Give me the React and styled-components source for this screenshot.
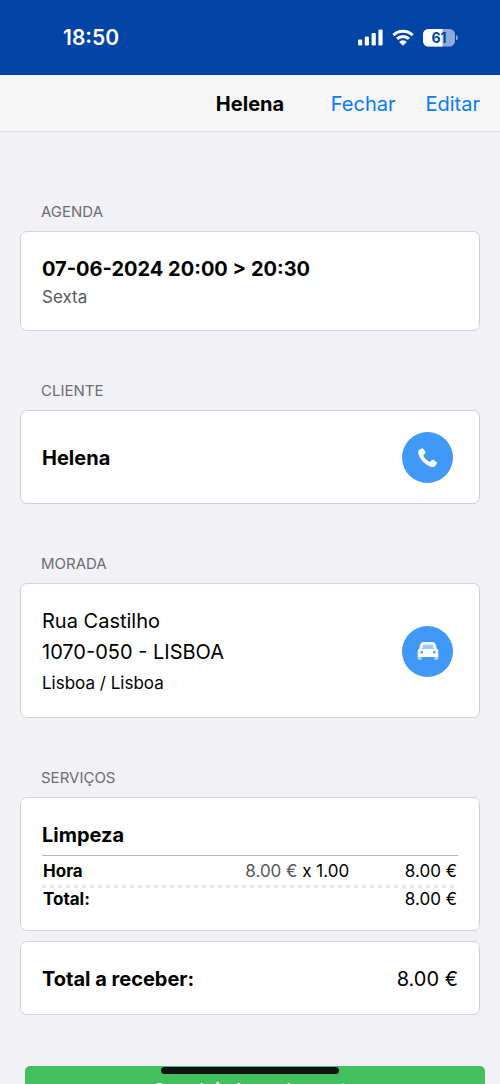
import styled, { createGlobalStyle } from "styled-components";

const GlobalStyle = createGlobalStyle`
  * {
    box-sizing: border-box;
  }
  body {
    margin: 0;
    background: #f2f1f6;
    color: #000;
    font-family: Inter, "Liberation Sans", sans-serif;
    font-size: 20px;
  }
  h1, h2, h3, p {
    margin: 0;
    font-size: inherit;
    font-weight: inherit;
  }
`;

const Screen = styled.div`
  display: flex;
  flex-direction: column;
  height: 100vh;
`;

const StatusBar = styled.div`
  display: flex;
  flex-shrink: 0;
  align-items: center;
  justify-content: space-between;
  height: 75px;
  padding: 0 42px 0 63px;
  background: #0244a5;
  color: #fff;
`;

const Clock = styled.time`
  font-size: 21px;
  font-weight: 600;
`;

const StatusIcons = styled.div`
  display: flex;
  align-items: center;
  gap: 9px;
  svg {
    display: block;
  }
`;

const BatteryLevel = styled.text`
  font-size: 14px;
  font-weight: 700;
  fill: #0244a5;
`;

const NavBar = styled.header`
  display: grid;
  grid-template-columns: 1fr auto 1fr;
  flex-shrink: 0;
  align-items: center;
  height: 57px;
  padding: 2px 20px 0;
  background: #f7f7f7;
  border-bottom: 1px solid #dedee1;
`;

const NavTitle = styled.h1`
  grid-column: 2;
  font-weight: 700;
`;

const NavActions = styled.div`
  display: flex;
  justify-content: flex-end;
  gap: 30px;
`;

const NavButton = styled.button`
  padding: 0;
  border: 0;
  background: none;
  color: #067bfd;
  font: inherit;
`;

const Content = styled.main`
  flex: 1;
  min-height: 0;
  padding: 20px 20px 0;
  overflow-y: auto;
  scrollbar-width: none;
`;

const SectionTitle = styled.h2`
  padding: 50px 21px 9px;
  color: #6d6d72;
  font-size: 15px;
  line-height: 20px;
`;

const Card = styled.div`
  display: flex;
  align-items: center;
  justify-content: space-between;
  padding: 21px 21px 20px;
  background: #fff;
  border: 1px solid #d2d2d4;
  border-radius: 7px;
  & + & {
    margin-top: 10px;
  }
`;

const Line = styled.p`
  padding-top: 2px;
  color: #000;
  font-weight: ${(props) => (props.$bold ? 700 : 400)};
  line-height: 29px;
`;

const Region = styled(Line)`
  font-size: 17px;
  line-height: 28px;
`;

const Weekday = styled(Line)`
  padding-top: 0;
  color: #58585c;
  font-size: 17px;
  line-height: 26px;
`;

const RoundButton = styled.button`
  display: flex;
  align-items: center;
  justify-content: center;
  width: 51px;
  height: 51px;
  margin-right: 5px;
  padding: 0;
  border: 0;
  border-radius: 50%;
  background: #4098f7;
  color: #fff;
`;

const Service = styled.div`
  flex: 1;
`;

const ServiceName = styled.h3`
  padding-bottom: 4px;
  border-bottom: 1px solid #b9b9bb;
  font-weight: 700;
  line-height: 32px;
`;

const PriceTable = styled.table`
  width: 100%;
  border-collapse: collapse;
  font-size: 17px;
  th,
  td {
    padding: 0 1px;
    line-height: 22px;
    text-align: right;
  }
  th {
    font-weight: 700;
    text-align: left;
  }
`;

const ItemRow = styled.tr`
  background-image: linear-gradient(to right, #e1e4e9 50%, transparent 50%);
  background-position: 0 100%;
  background-size: 8px 3px;
  background-repeat: round no-repeat;
  th,
  td {
    padding: 1px 1px 3px;
    line-height: 28px;
  }
`;

const UnitPrice = styled.span`
  color: #58585c;
`;

const SubmitButton = styled.button`
  display: block;
  width: 100%;
  height: 48px;
  margin: 51px 0 40px 5px;
  padding: 0;
  border: 0;
  border-radius: 5px;
  background: #43bf5e;
  color: #fff;
  font: inherit;
  font-size: 19px;
`;

const HomeIndicator = styled.div`
  position: fixed;
  bottom: 10px;
  left: 50%;
  width: 178px;
  height: 7px;
  border-radius: 4px;
  background: #111;
  transform: translateX(-50%);
`;

const Signal = () => (
  <svg width="25" height="17" viewBox="0 0 25 17" fill="#fff">
    <rect x="0" y="10.5" width="4.2" height="6" rx="1.2" />
    <rect x="6.8" y="7.5" width="4.2" height="9" rx="1.2" />
    <rect x="13.6" y="4" width="4.2" height="12.5" rx="1.2" />
    <rect x="20.4" y="0.5" width="4.2" height="16" rx="1.2" />
  </svg>
);

const Wifi = () => (
  <svg width="22" height="17" viewBox="0 0 22 17">
    <g fill="none" stroke="#fff" strokeWidth="3">
      <path d="M1.4 6.1a13.8 13.8 0 0 1 19.2 0" />
      <path d="M5.1 9.9a8.5 8.5 0 0 1 11.8 0" />
    </g>
    <path
      d="M11 16.6 7.4 13a5.2 5.2 0 0 1 7.2 0z"
      fill="#fff"
      stroke="#fff"
      strokeWidth="0.4"
      strokeLinejoin="round"
    />
  </svg>
);

const Battery = () => (
  <svg width="35" height="18" viewBox="0 0 35 18">
    <rect width="32" height="17.5" rx="5.5" fill="#8facd9" />
    <path d="M5.5 0H19.5V17.5H5.5A5.5 5.5 0 0 1 0 12V5.5A5.5 5.5 0 0 1 5.5 0z" fill="#fff" />
    <path d="M33 6v5.6a3 3 0 0 0 0-5.6z" fill="#8facd9" />
    <BatteryLevel x="16" y="14" textAnchor="middle">
      61
    </BatteryLevel>
  </svg>
);

const Phone = () => (
  <svg width="22" height="22" viewBox="0 0 22 22" fill="currentColor">
    <path d="M2.4 2.8 4.4 1.4c.6-.4 1.3-.3 1.8.3l2 2.9c.4.7.3 1.4-.2 1.9L6.7 7.8c-.4.4-.4.9-.1 1.4 1.3 2.3 3.1 4.1 5.4 5.4.5.3 1 .3 1.4-.1l1.3-1.3c.5-.5 1.2-.6 1.9-.2l2.9 2c.6.5.7 1.2.3 1.8l-1.4 2c-.6.9-1.6 1.3-2.7 1.2C9 19.1 2 12.2 1.2 5.500c-.1-1.1.3-2.1 1.2-2.7z" />
  </svg>
);

const Car = () => (
  <svg width="22" height="20" viewBox="0 0 22 20" fill="currentColor">
    <path
      d="M.7 15h3.900v2.700a1 1 0 0 1-1 1H1.700a1 1 0 0 1-1-1zM17.400 15h3.900v2.700a1 1 0 0 1-1 1h-1.900a1 1 0 0 1-1-1z"
      opacity="0.6"
    />
    <path
      fillRule="evenodd"
      d="M6.500 1h9c1.500 0 2.500.8 3 2.200L19.900 8c1 .5 1.400 1.300 1.400 2.300V16H.7v-5.700C.7 9.300 1.100 8.500 2.100 8l1.400-4.800C4 1.800 5 1 6.500 1zM6.500 3.700 5.200 7.900h11.600l-1.300-4.200zM4.700 10a1.300 1.300 0 1 0 0 2.600 1.300 1.300 0 0 0 0-2.600zM17.300 10a1.300 1.300 0 1 0 0 2.600 1.300 1.300 0 0 0 0-2.600z"
    />
    <path d="M6.500 3.700h9l1.300 4.200H5.200z" opacity="0.5" />
  </svg>
);

const App = () => {
  return (
    <Screen>
      <GlobalStyle />
      <StatusBar>
        <Clock>18:50</Clock>
        <StatusIcons>
          <Signal />
          <Wifi />
          <Battery />
        </StatusIcons>
      </StatusBar>
      <NavBar>
        <NavTitle>Helena</NavTitle>
        <NavActions>
          <NavButton>Fechar</NavButton>
          <NavButton>Editar</NavButton>
        </NavActions>
      </NavBar>
      <Content>
        <SectionTitle>AGENDA</SectionTitle>
        <Card>
          <div>
            <Line $bold>07-06-2024 20:00 &gt; 20:30</Line>
            <Weekday>Sexta</Weekday>
          </div>
        </Card>

        <SectionTitle>CLIENTE</SectionTitle>
        <Card>
          <Line $bold>Helena</Line>
          <RoundButton aria-label="Telefonar">
            <Phone />
          </RoundButton>
        </Card>

        <SectionTitle>MORADA</SectionTitle>
        <Card>
          <div>
            <Line>Rua Castilho</Line>
            <Line>1070-050 - LISBOA</Line>
            <Region>Lisboa / Lisboa</Region>
          </div>
          <RoundButton aria-label="Direções">
            <Car />
          </RoundButton>
        </Card>

        <SectionTitle>SERVIÇOS</SectionTitle>
        <Card>
          <Service>
            <ServiceName>Limpeza</ServiceName>
            <PriceTable>
              <tbody>
                <ItemRow>
                  <th scope="row">Hora</th>
                  <td>
                    <UnitPrice>8.00 €</UnitPrice> x 1.00
                  </td>
                  <td>8.00 €</td>
                </ItemRow>
                <tr>
                  <th scope="row">Total:</th>
                  <td colSpan={2}>8.00 €</td>
                </tr>
              </tbody>
            </PriceTable>
          </Service>
        </Card>
        <Card>
          <Line $bold>Total a receber:</Line>
          <Line>8.00 €</Line>
        </Card>

        <SubmitButton>Concluir Agendamento</SubmitButton>
      </Content>
      <HomeIndicator />
    </Screen>
  );
};

export default App;
